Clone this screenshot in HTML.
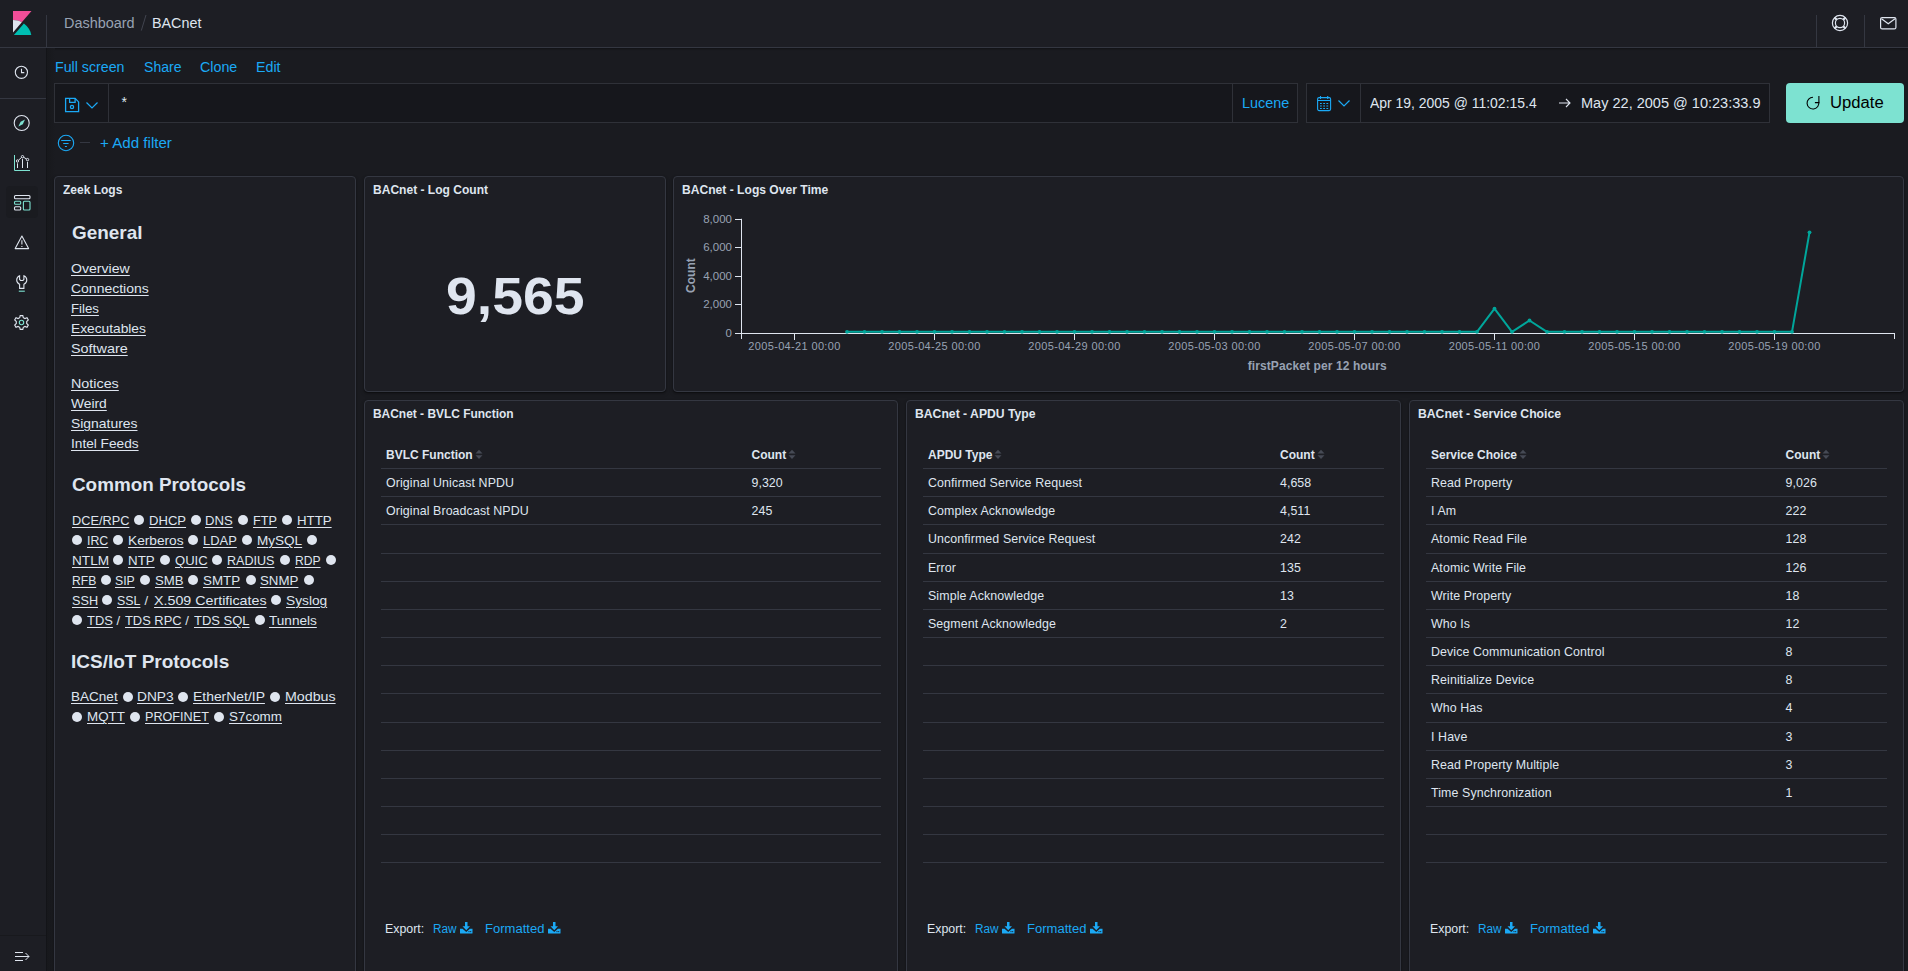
<!DOCTYPE html>
<html><head><meta charset="utf-8">
<style>
*{box-sizing:border-box;margin:0;padding:0}
html,body{width:1908px;height:971px;overflow:hidden;background:#1a1b20;font-family:"Liberation Sans",sans-serif;color:#dfe5ef}
div,span,svg{position:absolute}
.t{white-space:nowrap;line-height:1}
.link{color:#1ba9f5}
.panel{background:#1d1e24;border:1px solid #343741;border-radius:5px;overflow:hidden}
.ptitle{left:8px;top:7px;font-size:12px;font-weight:bold;color:#dfe5ef;line-height:14px;white-space:nowrap}
svg{overflow:visible}
</style><style>
.pl{white-space:nowrap;font-size:13px;line-height:1;color:#dfe5ef;letter-spacing:0.15px}
.pl u{text-decoration:underline;text-underline-offset:2px;text-decoration-thickness:1px;position:static}
.pl .bu{display:inline-block;position:relative;width:10px;height:10px;border-radius:50%;background:#dfe5ef;margin:0 5px;top:0px;vertical-align:-1px}
.pl .sl{font-weight:normal;margin:0 4px;position:static}
</style></head><body>
<!-- header -->
<div id="hdr" style="left:0;top:0;width:1908px;height:48px;background:#1d1e24;border-bottom:1px solid #343741;box-shadow:0 1px 2px rgba(0,0,0,.35)"></div>
<svg style="left:13px;top:11px" width="19" height="25" viewBox="0 0 19 25">
  <path d="M0 0 H18.5 L8.8 11.3 C6.5 9.6 3.5 8.9 0 8.9 Z" fill="#f04e98"/>
  <path d="M0 8.9 C3.5 8.9 6.5 9.6 8.8 11.3 L0 21.4 Z" fill="#dfe5ef"/>
  <path d="M0.9 24 L10.9 12.6 C15 15.6 17.6 19.5 18.3 24 Z" fill="#00bfb3"/>
</svg>
<div style="left:46px;top:15px;width:1px;height:33px;background:#343741"></div>
<div style="left:1816px;top:15px;width:1px;height:33px;background:#343741"></div>
<div style="left:1864px;top:15px;width:1px;height:33px;background:#343741"></div>
<svg style="left:1831px;top:14px" width="18" height="18" viewBox="0 0 18 18" fill="none" stroke="#dfe5ef" stroke-width="1.2">
  <circle cx="9" cy="9" r="7.6"/><circle cx="9" cy="9" r="4.6"/>
  <path d="M3.6 3.6 L5.8 5.8 M14.4 3.6 L12.2 5.8 M3.6 14.4 L5.8 12.2 M14.4 14.4 L12.2 12.2" stroke-width="2.2"/>
</svg>
<svg style="left:1880px;top:17px" width="17" height="13" viewBox="0 0 17 13" fill="none" stroke="#dfe5ef" stroke-width="1.2">
  <rect x="0.6" y="0.6" width="15.3" height="11.3" rx="1.5"/><path d="M1.5 1.8 L8.25 6.8 L15 1.8"/>
</svg>

<!-- sidebar -->
<div style="left:0;top:48px;width:46px;height:923px;background:#1d1e24"></div>
<div style="left:46px;top:48px;width:1px;height:923px;background:#131418"></div>
<div style="left:47px;top:48px;width:8px;height:923px;background:linear-gradient(90deg,#17181c,#1a1b20)"></div>
<div style="left:0;top:98px;width:46px;height:1px;background:#343741"></div>
<div style="left:0;top:935px;width:46px;height:1px;background:#18191d"></div>
<!-- clock -->
<svg style="left:14px;top:65px" width="15" height="15" viewBox="0 0 15 15" fill="none" stroke="#dfe5ef" stroke-width="1.1">
  <circle cx="7.4" cy="7.3" r="6.1"/><path d="M7.5 3.8 V7.6 H10.3"/>
</svg>
<!-- compass -->
<svg style="left:13px;top:115px" width="17" height="17" viewBox="0 0 17 17" fill="none" stroke="#dfe5ef" stroke-width="1.1">
  <circle cx="8.7" cy="8" r="7.5"/><path d="M12 4.6 L9.8 9.3 L5.4 11.4 L7.6 6.8 Z" fill="#7de2d1" stroke="none"/>
</svg>
<!-- visualize -->
<svg style="left:14px;top:154px" width="17" height="17" viewBox="0 0 17 17" fill="none" stroke="#dfe5ef" stroke-width="1">
  <path d="M0.5 1 V16.5 H16" stroke="#7de2d1"/>
  <circle cx="3.5" cy="7" r="1.2"/><circle cx="8.5" cy="2.7" r="1.2"/><circle cx="13.5" cy="5.6" r="1.2"/>
  <path d="M4.5 6.2 L7.6 3.4 M9.5 3.2 L12.5 5 M3.5 9.3 V14 M8.5 5 V14 M13.5 7.9 V14"/>
</svg>
<!-- dashboard (active) -->
<div style="left:6px;top:186px;width:32px;height:32px;border-radius:4px;background:#1a1b20"></div>
<svg style="left:14px;top:194px" width="17" height="17" viewBox="0 0 17 17" fill="none" stroke-width="1.1">
  <rect x="0.5" y="1.5" width="15.5" height="3.2" rx="1" stroke="#dfe5ef"/>
  <rect x="0.5" y="7.2" width="6.2" height="3.1" rx="1" stroke="#7de2d1"/>
  <rect x="0.5" y="12.7" width="6.2" height="3.3" rx="1" stroke="#dfe5ef"/>
  <rect x="9.4" y="7.2" width="6.6" height="8.8" rx="1" stroke="#7de2d1"/>
</svg>
<!-- warning -->
<svg style="left:14px;top:235px" width="16" height="15" viewBox="0 0 16 15" fill="none" stroke="#dfe5ef" stroke-width="1.1">
  <path d="M7.9 1 L14.6 13.6 H1.2 Z" stroke-linejoin="round"/><path d="M7.9 5.3 V9.6 M7.9 11 V12"/>
</svg>
<!-- wrench -->
<svg style="left:16px;top:275px" width="12" height="17" viewBox="0 0 12 17" fill="none" stroke="#dfe5ef" stroke-width="1.1">
  <path d="M3.6 0.8 C1.7 1.6 0.7 3.3 0.7 5.1 C0.7 7.1 1.9 8.6 3.6 9.3 V13.4 H7.9 V9.3 C9.6 8.6 10.8 7.1 10.8 5.1 C10.8 3.3 9.8 1.6 7.9 0.8 V4.5 L6.9 5.5 H4.6 L3.6 4.5 Z"/>
  <path d="M2.8 16.2 H8.8" stroke="#7de2d1"/>
</svg>
<!-- gear -->
<svg style="left:13px;top:314px" width="17" height="17" viewBox="0 0 17 17" fill="none" stroke="#dfe5ef" stroke-width="1.1">
  <path d="M7.2 0.6 H9.8 L10.3 2.7 L12 3.6 L14 2.8 L15.3 5 L13.7 6.5 V8.5 L15.3 10 L14 12.2 L12 11.4 L10.3 12.3 L9.8 14.4 H7.2 L6.7 12.3 L5 11.4 L3 12.2 L1.7 10 L3.3 8.5 V6.5 L1.7 5 L3 2.8 L5 3.6 L6.7 2.7 Z" transform="translate(0 1)"/>
  <circle cx="8.5" cy="8.5" r="2.2" stroke="#7de2d1"/>
</svg>
<!-- collapse -->
<svg style="left:15px;top:952px" width="15" height="10" viewBox="0 0 15 10" fill="none" stroke="#dfe5ef" stroke-width="1">
  <path d="M0 0.5 H8 M0 4.5 H14 M0 8.5 H8 M10.5 1 L14 4.5 L10.5 8"/>
</svg>

<!-- top links -->

<!-- query bar -->
<div style="left:54px;top:83px;width:1244px;height:40px;background:#16171c;border:1px solid #2f3138"></div>
<div style="left:108px;top:84px;width:1px;height:38px;background:#2f3138"></div>
<div style="left:1232px;top:84px;width:1px;height:38px;background:#2f3138"></div>
<svg style="left:64px;top:97px" width="16" height="16" viewBox="0 0 16 16" fill="none" stroke="#1ba9f5" stroke-width="1.3">
  <path d="M1.6 1.4 H11.1 L14.6 4.9 V14.6 H1.6 Z"/><path d="M5.6 1.4 V5.3 H11.1 V1.4"/><circle cx="8" cy="10" r="1.6"/>
</svg>
<svg style="left:86px;top:102px" width="12" height="7" viewBox="0 0 12 7" fill="none" stroke="#1ba9f5" stroke-width="1.2"><path d="M0.5 0.5 L6 6 L11.5 0.5"/></svg>

<div style="left:1306px;top:83px;width:464px;height:40px;background:#16171c;border:1px solid #2f3138"></div>
<div style="left:1360px;top:84px;width:1px;height:38px;background:#2f3138"></div>
<svg style="left:1317px;top:96px" width="15" height="16" viewBox="0 0 15 16" fill="none" stroke="#1ba9f5" stroke-width="1.1">
  <rect x="0.6" y="1.6" width="13" height="13" rx="1.5"/><path d="M0.6 4.5 H13.6 M3.5 0 V3 M10.7 0 V3"/>
  <path d="M3 7.5 H4.8 M6.2 7.5 H8 M9.4 7.5 H11.2 M3 10 H4.8 M6.2 10 H8 M9.4 10 H11.2 M3 12.5 H4.8 M6.2 12.5 H8 M9.4 12.5 H11.2" stroke-width="1.2"/>
</svg>
<svg style="left:1338px;top:100px" width="12" height="7" viewBox="0 0 12 7" fill="none" stroke="#1ba9f5" stroke-width="1.2"><path d="M0.5 0.5 L6 6 L11.5 0.5"/></svg>
<svg style="left:1559px;top:98px" width="12" height="10" viewBox="0 0 12 10" fill="none" stroke="#dfe5ef" stroke-width="1.1"><path d="M0 5 H11 M7 1 L11 5 L7 9"/></svg>

<div style="left:1786px;top:83px;width:118px;height:40px;background:#7de2d1;border-radius:4px"></div>
<svg style="left:1806px;top:95px" width="15" height="15" viewBox="0 0 15 15" fill="none" stroke="#000" stroke-width="1.1">
  <path d="M7 2.2 A5.9 5.9 0 1 0 12.75 6.9"/><path d="M12.9 0.9 V7.6 H8.9"/>
</svg>

<!-- filter row -->
<svg style="left:57px;top:134px" width="18" height="18" viewBox="0 0 18 18" fill="none" stroke="#1ba9f5" stroke-width="1.1">
  <circle cx="9" cy="9" r="7.7"/><path d="M4.2 6.5 H13.7 M6.2 9.5 H11.6 M7.9 12.5 H9.9"/>
</svg>
<div style="left:80px;top:142px;width:10px;height:1px;background:#343741"></div>

<div class="t" style="left:63.60px;top:16.25px;font-size:14px;color:#98a2b3;transform:scaleX(1.0314);transform-origin:0 0;">Dashboard</div>
<svg style="left:140px;top:14px" width="8" height="18" viewBox="0 0 8 18"><path d="M6 1 L1.3 16.6" stroke="#41444f" stroke-width="1"/></svg>
<div class="t" style="left:151.90px;top:16.25px;font-size:14px;color:#dfe5ef;transform:scaleX(1.0238);transform-origin:0 0;">BACnet</div>
<div class="t" style="left:55.30px;top:59.85px;font-size:14px;color:#1ba9f5;transform:scaleX(1.0155);transform-origin:0 0;">Full screen</div>
<div class="t" style="left:143.70px;top:59.85px;font-size:14px;color:#1ba9f5;transform:scaleX(1.0042);transform-origin:0 0;">Share</div>
<div class="t" style="left:199.70px;top:59.85px;font-size:14px;color:#1ba9f5;transform:scaleX(1.0202);transform-origin:0 0;">Clone</div>
<div class="t" style="left:255.70px;top:59.85px;font-size:14px;color:#1ba9f5;transform:scaleX(1.0155);transform-origin:0 0;">Edit</div>
<div class="t" style="left:121.4px;top:94.55px;font-size:14px;color:#dfe5ef;">*</div>
<div class="t" style="left:1241.50px;top:96.25px;font-size:14px;color:#1ba9f5;transform:scaleX(1.0282);transform-origin:0 0;">Lucene</div>
<div class="t" style="left:1370.40px;top:96.25px;font-size:14px;color:#dfe5ef;transform:scaleX(0.9961);transform-origin:0 0;">Apr 19, 2005 @ 11:02:15.4</div>
<div class="t" style="left:1580.50px;top:96.25px;font-size:14px;color:#dfe5ef;transform:scaleX(1.0374);transform-origin:0 0;">May 22, 2005 @ 10:23:33.9</div>
<div class="t" style="left:1830.40px;top:95.35px;font-size:16px;color:#000;transform:scaleX(1.0399);transform-origin:0 0;">Update</div>
<div class="t" style="left:100.00px;top:136.05px;font-size:14px;color:#1ba9f5;transform:scaleX(1.0807);transform-origin:0 0;">+ Add filter</div>
<div style="left:54px;top:176px;width:302px;height:925px;background:#1d1e24;border:1px solid #343741;border-radius:4px;box-shadow:0 1px 1.5px rgba(0,0,0,.45),0 2px 4px rgba(0,0,0,.15)"></div>
<div class="t" style="left:63.40px;top:183.64px;font-size:12px;color:#dfe5ef;transform:scaleX(0.9995);transform-origin:0 0;font-weight:bold;">Zeek Logs</div>
<div class="t" style="left:71.70px;top:222.61px;font-size:19px;color:#dfe5ef;transform:scaleX(0.9951);transform-origin:0 0;font-weight:bold;">General</div>
<div class="t" style="left:71.20px;top:261.99px;font-size:13px;color:#dfe5ef;transform:scaleX(1.0851);transform-origin:0 0;text-decoration:underline;text-underline-offset:2px;text-decoration-thickness:1px;">Overview</div>
<div class="t" style="left:71.20px;top:281.99px;font-size:13px;color:#dfe5ef;transform:scaleX(1.0747);transform-origin:0 0;text-decoration:underline;text-underline-offset:2px;text-decoration-thickness:1px;">Connections</div>
<div class="t" style="left:71.20px;top:301.99px;font-size:13px;color:#dfe5ef;transform:scaleX(1.0163);transform-origin:0 0;text-decoration:underline;text-underline-offset:2px;text-decoration-thickness:1px;">Files</div>
<div class="t" style="left:71.20px;top:321.99px;font-size:13px;color:#dfe5ef;transform:scaleX(1.0573);transform-origin:0 0;text-decoration:underline;text-underline-offset:2px;text-decoration-thickness:1px;">Executables</div>
<div class="t" style="left:71.20px;top:341.99px;font-size:13px;color:#dfe5ef;transform:scaleX(1.1050);transform-origin:0 0;text-decoration:underline;text-underline-offset:2px;text-decoration-thickness:1px;">Software</div>
<div class="t" style="left:71.20px;top:376.79px;font-size:13px;color:#dfe5ef;transform:scaleX(1.1024);transform-origin:0 0;text-decoration:underline;text-underline-offset:2px;text-decoration-thickness:1px;">Notices</div>
<div class="t" style="left:71.20px;top:396.79px;font-size:13px;color:#dfe5ef;transform:scaleX(1.0617);transform-origin:0 0;text-decoration:underline;text-underline-offset:2px;text-decoration-thickness:1px;">Weird</div>
<div class="t" style="left:71.20px;top:416.79px;font-size:13px;color:#dfe5ef;transform:scaleX(1.0696);transform-origin:0 0;text-decoration:underline;text-underline-offset:2px;text-decoration-thickness:1px;">Signatures</div>
<div class="t" style="left:71.20px;top:436.79px;font-size:13px;color:#dfe5ef;transform:scaleX(1.0509);transform-origin:0 0;text-decoration:underline;text-underline-offset:2px;text-decoration-thickness:1px;">Intel Feeds</div>
<div class="t" style="left:71.60px;top:475.01px;font-size:19px;color:#dfe5ef;transform:scaleX(0.9924);transform-origin:0 0;font-weight:bold;">Common Protocols</div>
<div class="t" style="left:71.20px;top:651.81px;font-size:19px;color:#dfe5ef;transform:scaleX(0.9990);transform-origin:0 0;font-weight:bold;">ICS/IoT Protocols</div>
<div class="t" style="left:71.59px;top:513.59px;font-size:13px;color:#dfe5ef;transform:scaleX(0.9801);transform-origin:0 0;text-decoration:underline;text-underline-offset:2px;text-decoration-thickness:1px;">DCE/RPC</div>
<div style="left:133.83px;top:515.40px;width:10px;height:10px;border-radius:50%;background:#dfe5ef"></div>
<div class="t" style="left:148.72px;top:513.59px;font-size:13px;color:#dfe5ef;transform:scaleX(1.0064);transform-origin:0 0;text-decoration:underline;text-underline-offset:2px;text-decoration-thickness:1px;">DHCP</div>
<div style="left:190.60px;top:515.40px;width:10px;height:10px;border-radius:50%;background:#dfe5ef"></div>
<div class="t" style="left:205.08px;top:513.59px;font-size:13px;color:#dfe5ef;transform:scaleX(1.0085);transform-origin:0 0;text-decoration:underline;text-underline-offset:2px;text-decoration-thickness:1px;">DNS</div>
<div style="left:237.82px;top:515.40px;width:10px;height:10px;border-radius:50%;background:#dfe5ef"></div>
<div class="t" style="left:252.87px;top:513.59px;font-size:13px;color:#dfe5ef;transform:scaleX(0.9735);transform-origin:0 0;text-decoration:underline;text-underline-offset:2px;text-decoration-thickness:1px;">FTP</div>
<div style="left:281.90px;top:515.40px;width:10px;height:10px;border-radius:50%;background:#dfe5ef"></div>
<div class="t" style="left:297.04px;top:513.59px;font-size:13px;color:#dfe5ef;transform:scaleX(1.0198);transform-origin:0 0;text-decoration:underline;text-underline-offset:2px;text-decoration-thickness:1px;">HTTP</div>
<div style="left:72.03px;top:535.40px;width:10px;height:10px;border-radius:50%;background:#dfe5ef"></div>
<div class="t" style="left:86.92px;top:533.59px;font-size:13px;color:#dfe5ef;transform:scaleX(0.9495);transform-origin:0 0;text-decoration:underline;text-underline-offset:2px;text-decoration-thickness:1px;">IRC</div>
<div style="left:112.90px;top:535.40px;width:10px;height:10px;border-radius:50%;background:#dfe5ef"></div>
<div class="t" style="left:128.12px;top:533.59px;font-size:13px;color:#dfe5ef;transform:scaleX(1.0525);transform-origin:0 0;text-decoration:underline;text-underline-offset:2px;text-decoration-thickness:1px;">Kerberos</div>
<div style="left:188.38px;top:535.40px;width:10px;height:10px;border-radius:50%;background:#dfe5ef"></div>
<div class="t" style="left:203.10px;top:533.59px;font-size:13px;color:#dfe5ef;transform:scaleX(0.9946);transform-origin:0 0;text-decoration:underline;text-underline-offset:2px;text-decoration-thickness:1px;">LDAP</div>
<div style="left:241.69px;top:535.40px;width:10px;height:10px;border-radius:50%;background:#dfe5ef"></div>
<div class="t" style="left:256.66px;top:533.59px;font-size:13px;color:#dfe5ef;transform:scaleX(1.0418);transform-origin:0 0;text-decoration:underline;text-underline-offset:2px;text-decoration-thickness:1px;">MySQL</div>
<div style="left:306.70px;top:535.40px;width:10px;height:10px;border-radius:50%;background:#dfe5ef"></div>
<div class="t" style="left:71.59px;top:553.59px;font-size:13px;color:#dfe5ef;transform:scaleX(1.0477);transform-origin:0 0;text-decoration:underline;text-underline-offset:2px;text-decoration-thickness:1px;">NTLM</div>
<div style="left:113.39px;top:555.40px;width:10px;height:10px;border-radius:50%;background:#dfe5ef"></div>
<div class="t" style="left:128.12px;top:553.59px;font-size:13px;color:#dfe5ef;transform:scaleX(1.0268);transform-origin:0 0;text-decoration:underline;text-underline-offset:2px;text-decoration-thickness:1px;">NTP</div>
<div style="left:159.87px;top:555.40px;width:10px;height:10px;border-radius:50%;background:#dfe5ef"></div>
<div class="t" style="left:174.92px;top:553.59px;font-size:13px;color:#dfe5ef;transform:scaleX(1.0040);transform-origin:0 0;text-decoration:underline;text-underline-offset:2px;text-decoration-thickness:1px;">QUIC</div>
<div style="left:212.27px;top:555.40px;width:10px;height:10px;border-radius:50%;background:#dfe5ef"></div>
<div class="t" style="left:227.33px;top:553.59px;font-size:13px;color:#dfe5ef;transform:scaleX(0.9661);transform-origin:0 0;text-decoration:underline;text-underline-offset:2px;text-decoration-thickness:1px;">RADIUS</div>
<div style="left:280.17px;top:555.40px;width:10px;height:10px;border-radius:50%;background:#dfe5ef"></div>
<div class="t" style="left:295.22px;top:553.59px;font-size:13px;color:#dfe5ef;transform:scaleX(0.9305);transform-origin:0 0;text-decoration:underline;text-underline-offset:2px;text-decoration-thickness:1px;">RDP</div>
<div style="left:325.99px;top:555.40px;width:10px;height:10px;border-radius:50%;background:#dfe5ef"></div>
<div class="t" style="left:71.59px;top:573.59px;font-size:13px;color:#dfe5ef;transform:scaleX(0.9317);transform-origin:0 0;text-decoration:underline;text-underline-offset:2px;text-decoration-thickness:1px;">RFB</div>
<div style="left:100.54px;top:575.40px;width:10px;height:10px;border-radius:50%;background:#dfe5ef"></div>
<div class="t" style="left:115.26px;top:573.59px;font-size:13px;color:#dfe5ef;transform:scaleX(0.9438);transform-origin:0 0;text-decoration:underline;text-underline-offset:2px;text-decoration-thickness:1px;">SIP</div>
<div style="left:140.09px;top:575.40px;width:10px;height:10px;border-radius:50%;background:#dfe5ef"></div>
<div class="t" style="left:155.15px;top:573.59px;font-size:13px;color:#dfe5ef;transform:scaleX(1.0120);transform-origin:0 0;text-decoration:underline;text-underline-offset:2px;text-decoration-thickness:1px;">SMB</div>
<div style="left:188.38px;top:575.40px;width:10px;height:10px;border-radius:50%;background:#dfe5ef"></div>
<div class="t" style="left:203.43px;top:573.59px;font-size:13px;color:#dfe5ef;transform:scaleX(1.0269);transform-origin:0 0;text-decoration:underline;text-underline-offset:2px;text-decoration-thickness:1px;">SMTP</div>
<div style="left:245.56px;top:575.40px;width:10px;height:10px;border-radius:50%;background:#dfe5ef"></div>
<div class="t" style="left:260.29px;top:573.59px;font-size:13px;color:#dfe5ef;transform:scaleX(1.0222);transform-origin:0 0;text-decoration:underline;text-underline-offset:2px;text-decoration-thickness:1px;">SNMP</div>
<div style="left:303.74px;top:575.40px;width:10px;height:10px;border-radius:50%;background:#dfe5ef"></div>
<div class="t" style="left:71.59px;top:593.59px;font-size:13px;color:#dfe5ef;transform:scaleX(0.9740);transform-origin:0 0;text-decoration:underline;text-underline-offset:2px;text-decoration-thickness:1px;">SSH</div>
<div style="left:102.44px;top:595.40px;width:10px;height:10px;border-radius:50%;background:#dfe5ef"></div>
<div class="t" style="left:117.41px;top:593.59px;font-size:13px;color:#dfe5ef;transform:scaleX(0.9521);transform-origin:0 0;text-decoration:underline;text-underline-offset:2px;text-decoration-thickness:1px;">SSL</div>
<div class="t" style="left:144.42748846407383px;top:593.59px;font-size:13px;color:#dfe5ef;">/</div>
<div class="t" style="left:153.50px;top:593.59px;font-size:13px;color:#dfe5ef;transform:scaleX(1.0968);transform-origin:0 0;text-decoration:underline;text-underline-offset:2px;text-decoration-thickness:1px;">X.509 Certificates</div>
<div style="left:270.78px;top:595.40px;width:10px;height:10px;border-radius:50%;background:#dfe5ef"></div>
<div class="t" style="left:285.83px;top:593.59px;font-size:13px;color:#dfe5ef;transform:scaleX(1.0556);transform-origin:0 0;text-decoration:underline;text-underline-offset:2px;text-decoration-thickness:1px;">Syslog</div>
<div style="left:72.03px;top:615.40px;width:10px;height:10px;border-radius:50%;background:#dfe5ef"></div>
<div class="t" style="left:86.92px;top:613.59px;font-size:13px;color:#dfe5ef;transform:scaleX(0.9951);transform-origin:0 0;text-decoration:underline;text-underline-offset:2px;text-decoration-thickness:1px;">TDS</div>
<div class="t" style="left:116.41166776532631px;top:613.59px;font-size:13px;color:#dfe5ef;">/</div>
<div class="t" style="left:125.15px;top:613.59px;font-size:13px;color:#dfe5ef;transform:scaleX(0.9906);transform-origin:0 0;text-decoration:underline;text-underline-offset:2px;text-decoration-thickness:1px;">TDS RPC</div>
<div class="t" style="left:185.29762689518788px;top:613.59px;font-size:13px;color:#dfe5ef;">/</div>
<div class="t" style="left:194.04px;top:613.59px;font-size:13px;color:#dfe5ef;transform:scaleX(0.9984);transform-origin:0 0;text-decoration:underline;text-underline-offset:2px;text-decoration-thickness:1px;">TDS SQL</div>
<div style="left:254.63px;top:615.40px;width:10px;height:10px;border-radius:50%;background:#dfe5ef"></div>
<div class="t" style="left:269.35px;top:613.59px;font-size:13px;color:#dfe5ef;transform:scaleX(1.0439);transform-origin:0 0;text-decoration:underline;text-underline-offset:2px;text-decoration-thickness:1px;">Tunnels</div>
<div class="t" style="left:71.16px;top:689.79px;font-size:13px;color:#dfe5ef;transform:scaleX(1.0414);transform-origin:0 0;text-decoration:underline;text-underline-offset:2px;text-decoration-thickness:1px;">BACnet</div>
<div style="left:122.67px;top:691.60px;width:10px;height:10px;border-radius:50%;background:#dfe5ef"></div>
<div class="t" style="left:137.20px;top:689.79px;font-size:13px;color:#dfe5ef;transform:scaleX(1.0577);transform-origin:0 0;text-decoration:underline;text-underline-offset:2px;text-decoration-thickness:1px;">DNP3</div>
<div style="left:178.43px;top:691.60px;width:10px;height:10px;border-radius:50%;background:#dfe5ef"></div>
<div class="t" style="left:192.97px;top:689.79px;font-size:13px;color:#dfe5ef;transform:scaleX(1.0701);transform-origin:0 0;text-decoration:underline;text-underline-offset:2px;text-decoration-thickness:1px;">EtherNet/IP</div>
<div style="left:269.86px;top:691.60px;width:10px;height:10px;border-radius:50%;background:#dfe5ef"></div>
<div class="t" style="left:285.14px;top:689.79px;font-size:13px;color:#dfe5ef;transform:scaleX(1.0944);transform-origin:0 0;text-decoration:underline;text-underline-offset:2px;text-decoration-thickness:1px;">Modbus</div>
<div style="left:72.03px;top:711.60px;width:10px;height:10px;border-radius:50%;background:#dfe5ef"></div>
<div class="t" style="left:87.01px;top:709.79px;font-size:13px;color:#dfe5ef;transform:scaleX(1.0285);transform-origin:0 0;text-decoration:underline;text-underline-offset:2px;text-decoration-thickness:1px;">MQTT</div>
<div style="left:130.00px;top:711.60px;width:10px;height:10px;border-radius:50%;background:#dfe5ef"></div>
<div class="t" style="left:144.98px;top:709.79px;font-size:13px;color:#dfe5ef;transform:scaleX(0.9714);transform-origin:0 0;text-decoration:underline;text-underline-offset:2px;text-decoration-thickness:1px;">PROFINET</div>
<div style="left:214.09px;top:711.60px;width:10px;height:10px;border-radius:50%;background:#dfe5ef"></div>
<div class="t" style="left:228.93px;top:709.79px;font-size:13px;color:#dfe5ef;transform:scaleX(1.0328);transform-origin:0 0;text-decoration:underline;text-underline-offset:2px;text-decoration-thickness:1px;">S7comm</div>
<div style="left:364px;top:176px;width:302px;height:216px;background:#1d1e24;border:1px solid #343741;border-radius:4px;box-shadow:0 1px 1.5px rgba(0,0,0,.45),0 2px 4px rgba(0,0,0,.15)"></div>
<div class="t" style="left:373.00px;top:183.64px;font-size:12px;color:#dfe5ef;transform:scaleX(1.0031);transform-origin:0 0;font-weight:bold;">BACnet - Log Count</div>
<div class="t" style="left:445.80px;top:271.12px;font-size:51px;color:#dfe5ef;transform:scaleX(1.0846);transform-origin:0 0;font-weight:bold;">9,565</div>
<div style="left:673px;top:176px;width:1231px;height:216px;background:#1d1e24;border:1px solid #343741;border-radius:4px;box-shadow:0 1px 1.5px rgba(0,0,0,.45),0 2px 4px rgba(0,0,0,.15)"></div>
<div class="t" style="left:682.00px;top:183.64px;font-size:12px;color:#dfe5ef;transform:scaleX(1.0082);transform-origin:0 0;font-weight:bold;">BACnet - Logs Over Time</div>
<svg style="left:0;top:0" width="1908" height="971" viewBox="0 0 1908 971" font-family="Liberation Sans, sans-serif"><path d="M741.5 218.8 V339 M741 333.5 H1894.5 M1894.5 333 V339" stroke="#dfe5ef" stroke-width="1" fill="none"/><path d="M735 333.5 H741" stroke="#dfe5ef" stroke-width="1"/><text x="732" y="337.3" text-anchor="end" font-size="11.5" fill="#98a2b3">0</text><path d="M735 304.5 H741" stroke="#dfe5ef" stroke-width="1"/><text x="732" y="308.3" text-anchor="end" font-size="11.5" fill="#98a2b3">2,000</text><path d="M735 276.5 H741" stroke="#dfe5ef" stroke-width="1"/><text x="732" y="280.3" text-anchor="end" font-size="11.5" fill="#98a2b3">4,000</text><path d="M735 247.5 H741" stroke="#dfe5ef" stroke-width="1"/><text x="732" y="251.3" text-anchor="end" font-size="11.5" fill="#98a2b3">6,000</text><path d="M735 219.5 H741" stroke="#dfe5ef" stroke-width="1"/><text x="732" y="223.3" text-anchor="end" font-size="11.5" fill="#98a2b3">8,000</text><path d="M794.5 333 V340" stroke="#dfe5ef" stroke-width="1"/><text x="794.5" y="349.8" text-anchor="middle" font-size="11" fill="#98a2b3" letter-spacing="0.35">2005-04-21 00:00</text><path d="M934.5 333 V340" stroke="#dfe5ef" stroke-width="1"/><text x="934.5" y="349.8" text-anchor="middle" font-size="11" fill="#98a2b3" letter-spacing="0.35">2005-04-25 00:00</text><path d="M1074.5 333 V340" stroke="#dfe5ef" stroke-width="1"/><text x="1074.5" y="349.8" text-anchor="middle" font-size="11" fill="#98a2b3" letter-spacing="0.35">2005-04-29 00:00</text><path d="M1214.5 333 V340" stroke="#dfe5ef" stroke-width="1"/><text x="1214.5" y="349.8" text-anchor="middle" font-size="11" fill="#98a2b3" letter-spacing="0.35">2005-05-03 00:00</text><path d="M1354.5 333 V340" stroke="#dfe5ef" stroke-width="1"/><text x="1354.5" y="349.8" text-anchor="middle" font-size="11" fill="#98a2b3" letter-spacing="0.35">2005-05-07 00:00</text><path d="M1494.5 333 V340" stroke="#dfe5ef" stroke-width="1"/><text x="1494.5" y="349.8" text-anchor="middle" font-size="11" fill="#98a2b3" letter-spacing="0.35">2005-05-11 00:00</text><path d="M1634.5 333 V340" stroke="#dfe5ef" stroke-width="1"/><text x="1634.5" y="349.8" text-anchor="middle" font-size="11" fill="#98a2b3" letter-spacing="0.35">2005-05-15 00:00</text><path d="M1774.5 333 V340" stroke="#dfe5ef" stroke-width="1"/><text x="1774.5" y="349.8" text-anchor="middle" font-size="11" fill="#98a2b3" letter-spacing="0.35">2005-05-19 00:00</text><text x="1317.2" y="370.2" text-anchor="middle" font-size="12" font-weight="bold" fill="#98a2b3" letter-spacing="0.1">firstPacket per 12 hours</text><text transform="translate(694.5 275.6) rotate(-90)" text-anchor="middle" font-size="12" font-weight="bold" fill="#98a2b3">Count</text><path d="M847.0 331.8 L864.5 331.8 L882.0 331.8 L899.5 331.8 L917.0 331.8 L934.5 331.8 L952.0 331.8 L969.5 331.8 L987.0 331.8 L1004.5 331.8 L1022.0 331.8 L1039.5 331.8 L1057.0 331.8 L1074.5 331.8 L1092.0 331.8 L1109.5 331.8 L1127.0 331.8 L1144.5 331.8 L1162.0 331.8 L1179.5 331.8 L1197.0 331.8 L1214.5 331.8 L1232.0 331.8 L1249.5 331.8 L1267.0 331.8 L1284.5 331.8 L1302.0 331.8 L1319.5 331.8 L1337.0 331.8 L1354.5 331.8 L1372.0 331.8 L1389.5 331.8 L1407.0 331.8 L1424.5 331.8 L1442.0 331.8 L1459.5 331.8 L1477.0 331.8 L1494.5 308.6 L1512.0 331.8 L1529.5 320.5 L1547.0 331.8 L1564.5 331.8 L1582.0 331.8 L1599.5 331.8 L1617.0 331.8 L1634.5 331.8 L1652.0 331.8 L1669.5 331.8 L1687.0 331.8 L1704.5 331.8 L1722.0 331.8 L1739.5 331.8 L1757.0 331.8 L1774.5 331.8 L1792.0 331.8 L1809.5 232.3" stroke="#00a69b" stroke-width="2" fill="none" stroke-linejoin="round"/><circle cx="847.0" cy="331.8" r="1.9" fill="#00a69b"/><circle cx="864.5" cy="331.8" r="1.9" fill="#00a69b"/><circle cx="882.0" cy="331.8" r="1.9" fill="#00a69b"/><circle cx="899.5" cy="331.8" r="1.9" fill="#00a69b"/><circle cx="917.0" cy="331.8" r="1.9" fill="#00a69b"/><circle cx="934.5" cy="331.8" r="1.9" fill="#00a69b"/><circle cx="952.0" cy="331.8" r="1.9" fill="#00a69b"/><circle cx="969.5" cy="331.8" r="1.9" fill="#00a69b"/><circle cx="987.0" cy="331.8" r="1.9" fill="#00a69b"/><circle cx="1004.5" cy="331.8" r="1.9" fill="#00a69b"/><circle cx="1022.0" cy="331.8" r="1.9" fill="#00a69b"/><circle cx="1039.5" cy="331.8" r="1.9" fill="#00a69b"/><circle cx="1057.0" cy="331.8" r="1.9" fill="#00a69b"/><circle cx="1074.5" cy="331.8" r="1.9" fill="#00a69b"/><circle cx="1092.0" cy="331.8" r="1.9" fill="#00a69b"/><circle cx="1109.5" cy="331.8" r="1.9" fill="#00a69b"/><circle cx="1127.0" cy="331.8" r="1.9" fill="#00a69b"/><circle cx="1144.5" cy="331.8" r="1.9" fill="#00a69b"/><circle cx="1162.0" cy="331.8" r="1.9" fill="#00a69b"/><circle cx="1179.5" cy="331.8" r="1.9" fill="#00a69b"/><circle cx="1197.0" cy="331.8" r="1.9" fill="#00a69b"/><circle cx="1214.5" cy="331.8" r="1.9" fill="#00a69b"/><circle cx="1232.0" cy="331.8" r="1.9" fill="#00a69b"/><circle cx="1249.5" cy="331.8" r="1.9" fill="#00a69b"/><circle cx="1267.0" cy="331.8" r="1.9" fill="#00a69b"/><circle cx="1284.5" cy="331.8" r="1.9" fill="#00a69b"/><circle cx="1302.0" cy="331.8" r="1.9" fill="#00a69b"/><circle cx="1319.5" cy="331.8" r="1.9" fill="#00a69b"/><circle cx="1337.0" cy="331.8" r="1.9" fill="#00a69b"/><circle cx="1354.5" cy="331.8" r="1.9" fill="#00a69b"/><circle cx="1372.0" cy="331.8" r="1.9" fill="#00a69b"/><circle cx="1389.5" cy="331.8" r="1.9" fill="#00a69b"/><circle cx="1407.0" cy="331.8" r="1.9" fill="#00a69b"/><circle cx="1424.5" cy="331.8" r="1.9" fill="#00a69b"/><circle cx="1442.0" cy="331.8" r="1.9" fill="#00a69b"/><circle cx="1459.5" cy="331.8" r="1.9" fill="#00a69b"/><circle cx="1477.0" cy="331.8" r="1.9" fill="#00a69b"/><circle cx="1494.5" cy="308.6" r="1.9" fill="#00a69b"/><circle cx="1512.0" cy="331.8" r="1.9" fill="#00a69b"/><circle cx="1529.5" cy="320.5" r="1.9" fill="#00a69b"/><circle cx="1547.0" cy="331.8" r="1.9" fill="#00a69b"/><circle cx="1564.5" cy="331.8" r="1.9" fill="#00a69b"/><circle cx="1582.0" cy="331.8" r="1.9" fill="#00a69b"/><circle cx="1599.5" cy="331.8" r="1.9" fill="#00a69b"/><circle cx="1617.0" cy="331.8" r="1.9" fill="#00a69b"/><circle cx="1634.5" cy="331.8" r="1.9" fill="#00a69b"/><circle cx="1652.0" cy="331.8" r="1.9" fill="#00a69b"/><circle cx="1669.5" cy="331.8" r="1.9" fill="#00a69b"/><circle cx="1687.0" cy="331.8" r="1.9" fill="#00a69b"/><circle cx="1704.5" cy="331.8" r="1.9" fill="#00a69b"/><circle cx="1722.0" cy="331.8" r="1.9" fill="#00a69b"/><circle cx="1739.5" cy="331.8" r="1.9" fill="#00a69b"/><circle cx="1757.0" cy="331.8" r="1.9" fill="#00a69b"/><circle cx="1774.5" cy="331.8" r="1.9" fill="#00a69b"/><circle cx="1792.0" cy="331.8" r="1.9" fill="#00a69b"/><circle cx="1809.5" cy="232.3" r="1.9" fill="#00a69b"/></svg>
<div style="left:364px;top:400px;width:534px;height:701px;background:#1d1e24;border:1px solid #343741;border-radius:4px;box-shadow:0 1px 1.5px rgba(0,0,0,.45),0 2px 4px rgba(0,0,0,.15)"></div>
<div class="t" style="left:373.00px;top:407.84px;font-size:12px;color:#dfe5ef;transform:scaleX(0.9950);transform-origin:0 0;font-weight:bold;">BACnet - BVLC Function</div>
<div class="t" style="left:386px;top:448.84px;font-size:12px;color:#dfe5ef;font-weight:bold;">BVLC Function</div>
<svg style="left:474.640625px;top:449px" width="8" height="11" viewBox="0 0 8 11"><path d="M0.5 4.5 L4 0.8 L7.5 4.5 Z M0.5 6.3 L4 10 L7.5 6.3 Z" fill="#464a55"/></svg>
<div class="t" style="left:751.5px;top:448.84px;font-size:12px;color:#dfe5ef;font-weight:bold;">Count</div>
<svg style="left:788.15625px;top:449px" width="8" height="11" viewBox="0 0 8 11"><path d="M0.5 4.5 L4 0.8 L7.5 4.5 Z M0.5 6.3 L4 10 L7.5 6.3 Z" fill="#464a55"/></svg>
<div style="left:381px;top:468px;width:500px;height:1px;background:#343741"></div>
<div style="left:381px;top:496px;width:500px;height:1px;background:#343741"></div>
<div style="left:381px;top:524px;width:500px;height:1px;background:#343741"></div>
<div style="left:381px;top:553px;width:500px;height:1px;background:#343741"></div>
<div style="left:381px;top:581px;width:500px;height:1px;background:#343741"></div>
<div style="left:381px;top:609px;width:500px;height:1px;background:#343741"></div>
<div style="left:381px;top:637px;width:500px;height:1px;background:#343741"></div>
<div style="left:381px;top:665px;width:500px;height:1px;background:#343741"></div>
<div style="left:381px;top:693px;width:500px;height:1px;background:#343741"></div>
<div style="left:381px;top:722px;width:500px;height:1px;background:#343741"></div>
<div style="left:381px;top:750px;width:500px;height:1px;background:#343741"></div>
<div style="left:381px;top:778px;width:500px;height:1px;background:#343741"></div>
<div style="left:381px;top:806px;width:500px;height:1px;background:#343741"></div>
<div style="left:381px;top:834px;width:500px;height:1px;background:#343741"></div>
<div style="left:381px;top:862px;width:500px;height:1px;background:#343741"></div>
<div class="t" style="left:386px;top:476.80px;font-size:12.4px;color:#dfe5ef;letter-spacing:0.1px;">Original Unicast NPDU</div>
<div class="t" style="left:751.5px;top:476.80px;font-size:12.4px;color:#dfe5ef;letter-spacing:0.05px;">9,320</div>
<div class="t" style="left:386px;top:504.80px;font-size:12.4px;color:#dfe5ef;letter-spacing:0.1px;">Original Broadcast NPDU</div>
<div class="t" style="left:751.5px;top:504.80px;font-size:12.4px;color:#dfe5ef;letter-spacing:0.05px;">245</div>
<div class="t" style="left:385.40px;top:922.64px;font-size:12px;color:#dfe5ef;transform:scaleX(1.0289);transform-origin:0 0;">Export:</div>
<div class="t" style="left:432.60px;top:922.64px;font-size:12px;color:#1ba9f5;transform:scaleX(0.9827);transform-origin:0 0;">Raw</div>
<svg style="left:460px;top:922px" width="13" height="12" viewBox="0 0 13 12"><path d="M5 0 H7.5 V4.3 H10 L6.25 8.2 L2.5 4.3 H5 Z M0 6.8 H2.6 L6.25 10 L9.9 6.8 H12.5 V11 Q12.5 11.5 12 11.5 H0.5 Q0 11.5 0 11 Z" fill="#1ba9f5"/><circle cx="9" cy="9.6" r="0.6" fill="#1d1e24"/><circle cx="10.7" cy="9.6" r="0.6" fill="#1d1e24"/></svg>
<div class="t" style="left:484.50px;top:922.64px;font-size:12px;color:#1ba9f5;transform:scaleX(1.0865);transform-origin:0 0;">Formatted</div>
<svg style="left:547.7px;top:922px" width="13" height="12" viewBox="0 0 13 12"><path d="M5 0 H7.5 V4.3 H10 L6.25 8.2 L2.5 4.3 H5 Z M0 6.8 H2.6 L6.25 10 L9.9 6.8 H12.5 V11 Q12.5 11.5 12 11.5 H0.5 Q0 11.5 0 11 Z" fill="#1ba9f5"/><circle cx="9" cy="9.6" r="0.6" fill="#1d1e24"/><circle cx="10.7" cy="9.6" r="0.6" fill="#1d1e24"/></svg>
<div style="left:906px;top:400px;width:495px;height:701px;background:#1d1e24;border:1px solid #343741;border-radius:4px;box-shadow:0 1px 1.5px rgba(0,0,0,.45),0 2px 4px rgba(0,0,0,.15)"></div>
<div class="t" style="left:915.00px;top:407.84px;font-size:12px;color:#dfe5ef;transform:scaleX(1.0161);transform-origin:0 0;font-weight:bold;">BACnet - APDU Type</div>
<div class="t" style="left:928px;top:448.84px;font-size:12px;color:#dfe5ef;font-weight:bold;">APDU Type</div>
<svg style="left:994.453125px;top:449px" width="8" height="11" viewBox="0 0 8 11"><path d="M0.5 4.5 L4 0.8 L7.5 4.5 Z M0.5 6.3 L4 10 L7.5 6.3 Z" fill="#464a55"/></svg>
<div class="t" style="left:1280px;top:448.84px;font-size:12px;color:#dfe5ef;font-weight:bold;">Count</div>
<svg style="left:1316.65625px;top:449px" width="8" height="11" viewBox="0 0 8 11"><path d="M0.5 4.5 L4 0.8 L7.5 4.5 Z M0.5 6.3 L4 10 L7.5 6.3 Z" fill="#464a55"/></svg>
<div style="left:923px;top:468px;width:461px;height:1px;background:#343741"></div>
<div style="left:923px;top:496px;width:461px;height:1px;background:#343741"></div>
<div style="left:923px;top:524px;width:461px;height:1px;background:#343741"></div>
<div style="left:923px;top:553px;width:461px;height:1px;background:#343741"></div>
<div style="left:923px;top:581px;width:461px;height:1px;background:#343741"></div>
<div style="left:923px;top:609px;width:461px;height:1px;background:#343741"></div>
<div style="left:923px;top:637px;width:461px;height:1px;background:#343741"></div>
<div style="left:923px;top:665px;width:461px;height:1px;background:#343741"></div>
<div style="left:923px;top:693px;width:461px;height:1px;background:#343741"></div>
<div style="left:923px;top:722px;width:461px;height:1px;background:#343741"></div>
<div style="left:923px;top:750px;width:461px;height:1px;background:#343741"></div>
<div style="left:923px;top:778px;width:461px;height:1px;background:#343741"></div>
<div style="left:923px;top:806px;width:461px;height:1px;background:#343741"></div>
<div style="left:923px;top:834px;width:461px;height:1px;background:#343741"></div>
<div style="left:923px;top:862px;width:461px;height:1px;background:#343741"></div>
<div class="t" style="left:928px;top:476.80px;font-size:12.4px;color:#dfe5ef;letter-spacing:0.1px;">Confirmed Service Request</div>
<div class="t" style="left:1280px;top:476.80px;font-size:12.4px;color:#dfe5ef;letter-spacing:0.05px;">4,658</div>
<div class="t" style="left:928px;top:504.80px;font-size:12.4px;color:#dfe5ef;letter-spacing:0.1px;">Complex Acknowledge</div>
<div class="t" style="left:1280px;top:504.80px;font-size:12.4px;color:#dfe5ef;letter-spacing:0.05px;">4,511</div>
<div class="t" style="left:928px;top:532.80px;font-size:12.4px;color:#dfe5ef;letter-spacing:0.1px;">Unconfirmed Service Request</div>
<div class="t" style="left:1280px;top:532.80px;font-size:12.4px;color:#dfe5ef;letter-spacing:0.05px;">242</div>
<div class="t" style="left:928px;top:561.80px;font-size:12.4px;color:#dfe5ef;letter-spacing:0.1px;">Error</div>
<div class="t" style="left:1280px;top:561.80px;font-size:12.4px;color:#dfe5ef;letter-spacing:0.05px;">135</div>
<div class="t" style="left:928px;top:589.80px;font-size:12.4px;color:#dfe5ef;letter-spacing:0.1px;">Simple Acknowledge</div>
<div class="t" style="left:1280px;top:589.80px;font-size:12.4px;color:#dfe5ef;letter-spacing:0.05px;">13</div>
<div class="t" style="left:928px;top:617.80px;font-size:12.4px;color:#dfe5ef;letter-spacing:0.1px;">Segment Acknowledge</div>
<div class="t" style="left:1280px;top:617.80px;font-size:12.4px;color:#dfe5ef;letter-spacing:0.05px;">2</div>
<div class="t" style="left:927.40px;top:922.64px;font-size:12px;color:#dfe5ef;transform:scaleX(1.0289);transform-origin:0 0;">Export:</div>
<div class="t" style="left:974.60px;top:922.64px;font-size:12px;color:#1ba9f5;transform:scaleX(0.9827);transform-origin:0 0;">Raw</div>
<svg style="left:1002px;top:922px" width="13" height="12" viewBox="0 0 13 12"><path d="M5 0 H7.5 V4.3 H10 L6.25 8.2 L2.5 4.3 H5 Z M0 6.8 H2.6 L6.25 10 L9.9 6.8 H12.5 V11 Q12.5 11.5 12 11.5 H0.5 Q0 11.5 0 11 Z" fill="#1ba9f5"/><circle cx="9" cy="9.6" r="0.6" fill="#1d1e24"/><circle cx="10.7" cy="9.6" r="0.6" fill="#1d1e24"/></svg>
<div class="t" style="left:1026.50px;top:922.64px;font-size:12px;color:#1ba9f5;transform:scaleX(1.0865);transform-origin:0 0;">Formatted</div>
<svg style="left:1089.7px;top:922px" width="13" height="12" viewBox="0 0 13 12"><path d="M5 0 H7.5 V4.3 H10 L6.25 8.2 L2.5 4.3 H5 Z M0 6.8 H2.6 L6.25 10 L9.9 6.8 H12.5 V11 Q12.5 11.5 12 11.5 H0.5 Q0 11.5 0 11 Z" fill="#1ba9f5"/><circle cx="9" cy="9.6" r="0.6" fill="#1d1e24"/><circle cx="10.7" cy="9.6" r="0.6" fill="#1d1e24"/></svg>
<div style="left:1409px;top:400px;width:495px;height:701px;background:#1d1e24;border:1px solid #343741;border-radius:4px;box-shadow:0 1px 1.5px rgba(0,0,0,.45),0 2px 4px rgba(0,0,0,.15)"></div>
<div class="t" style="left:1418.00px;top:407.84px;font-size:12px;color:#dfe5ef;transform:scaleX(1.0164);transform-origin:0 0;font-weight:bold;">BACnet - Service Choice</div>
<div class="t" style="left:1431px;top:448.84px;font-size:12px;color:#dfe5ef;font-weight:bold;">Service Choice</div>
<svg style="left:1519.015625px;top:449px" width="8" height="11" viewBox="0 0 8 11"><path d="M0.5 4.5 L4 0.8 L7.5 4.5 Z M0.5 6.3 L4 10 L7.5 6.3 Z" fill="#464a55"/></svg>
<div class="t" style="left:1785.6px;top:448.84px;font-size:12px;color:#dfe5ef;font-weight:bold;">Count</div>
<svg style="left:1822.25625px;top:449px" width="8" height="11" viewBox="0 0 8 11"><path d="M0.5 4.5 L4 0.8 L7.5 4.5 Z M0.5 6.3 L4 10 L7.5 6.3 Z" fill="#464a55"/></svg>
<div style="left:1426px;top:468px;width:461px;height:1px;background:#343741"></div>
<div style="left:1426px;top:496px;width:461px;height:1px;background:#343741"></div>
<div style="left:1426px;top:524px;width:461px;height:1px;background:#343741"></div>
<div style="left:1426px;top:553px;width:461px;height:1px;background:#343741"></div>
<div style="left:1426px;top:581px;width:461px;height:1px;background:#343741"></div>
<div style="left:1426px;top:609px;width:461px;height:1px;background:#343741"></div>
<div style="left:1426px;top:637px;width:461px;height:1px;background:#343741"></div>
<div style="left:1426px;top:665px;width:461px;height:1px;background:#343741"></div>
<div style="left:1426px;top:693px;width:461px;height:1px;background:#343741"></div>
<div style="left:1426px;top:722px;width:461px;height:1px;background:#343741"></div>
<div style="left:1426px;top:750px;width:461px;height:1px;background:#343741"></div>
<div style="left:1426px;top:778px;width:461px;height:1px;background:#343741"></div>
<div style="left:1426px;top:806px;width:461px;height:1px;background:#343741"></div>
<div style="left:1426px;top:834px;width:461px;height:1px;background:#343741"></div>
<div style="left:1426px;top:862px;width:461px;height:1px;background:#343741"></div>
<div class="t" style="left:1431px;top:476.80px;font-size:12.4px;color:#dfe5ef;letter-spacing:0.1px;">Read Property</div>
<div class="t" style="left:1785.6px;top:476.80px;font-size:12.4px;color:#dfe5ef;letter-spacing:0.05px;">9,026</div>
<div class="t" style="left:1431px;top:504.80px;font-size:12.4px;color:#dfe5ef;letter-spacing:0.1px;">I Am</div>
<div class="t" style="left:1785.6px;top:504.80px;font-size:12.4px;color:#dfe5ef;letter-spacing:0.05px;">222</div>
<div class="t" style="left:1431px;top:532.80px;font-size:12.4px;color:#dfe5ef;letter-spacing:0.1px;">Atomic Read File</div>
<div class="t" style="left:1785.6px;top:532.80px;font-size:12.4px;color:#dfe5ef;letter-spacing:0.05px;">128</div>
<div class="t" style="left:1431px;top:561.80px;font-size:12.4px;color:#dfe5ef;letter-spacing:0.1px;">Atomic Write File</div>
<div class="t" style="left:1785.6px;top:561.80px;font-size:12.4px;color:#dfe5ef;letter-spacing:0.05px;">126</div>
<div class="t" style="left:1431px;top:589.80px;font-size:12.4px;color:#dfe5ef;letter-spacing:0.1px;">Write Property</div>
<div class="t" style="left:1785.6px;top:589.80px;font-size:12.4px;color:#dfe5ef;letter-spacing:0.05px;">18</div>
<div class="t" style="left:1431px;top:617.80px;font-size:12.4px;color:#dfe5ef;letter-spacing:0.1px;">Who Is</div>
<div class="t" style="left:1785.6px;top:617.80px;font-size:12.4px;color:#dfe5ef;letter-spacing:0.05px;">12</div>
<div class="t" style="left:1431px;top:645.80px;font-size:12.4px;color:#dfe5ef;letter-spacing:0.1px;">Device Communication Control</div>
<div class="t" style="left:1785.6px;top:645.80px;font-size:12.4px;color:#dfe5ef;letter-spacing:0.05px;">8</div>
<div class="t" style="left:1431px;top:673.80px;font-size:12.4px;color:#dfe5ef;letter-spacing:0.1px;">Reinitialize Device</div>
<div class="t" style="left:1785.6px;top:673.80px;font-size:12.4px;color:#dfe5ef;letter-spacing:0.05px;">8</div>
<div class="t" style="left:1431px;top:701.80px;font-size:12.4px;color:#dfe5ef;letter-spacing:0.1px;">Who Has</div>
<div class="t" style="left:1785.6px;top:701.80px;font-size:12.4px;color:#dfe5ef;letter-spacing:0.05px;">4</div>
<div class="t" style="left:1431px;top:730.80px;font-size:12.4px;color:#dfe5ef;letter-spacing:0.1px;">I Have</div>
<div class="t" style="left:1785.6px;top:730.80px;font-size:12.4px;color:#dfe5ef;letter-spacing:0.05px;">3</div>
<div class="t" style="left:1431px;top:758.80px;font-size:12.4px;color:#dfe5ef;letter-spacing:0.1px;">Read Property Multiple</div>
<div class="t" style="left:1785.6px;top:758.80px;font-size:12.4px;color:#dfe5ef;letter-spacing:0.05px;">3</div>
<div class="t" style="left:1431px;top:786.80px;font-size:12.4px;color:#dfe5ef;letter-spacing:0.1px;">Time Synchronization</div>
<div class="t" style="left:1785.6px;top:786.80px;font-size:12.4px;color:#dfe5ef;letter-spacing:0.05px;">1</div>
<div class="t" style="left:1430.40px;top:922.64px;font-size:12px;color:#dfe5ef;transform:scaleX(1.0289);transform-origin:0 0;">Export:</div>
<div class="t" style="left:1477.60px;top:922.64px;font-size:12px;color:#1ba9f5;transform:scaleX(0.9827);transform-origin:0 0;">Raw</div>
<svg style="left:1505px;top:922px" width="13" height="12" viewBox="0 0 13 12"><path d="M5 0 H7.5 V4.3 H10 L6.25 8.2 L2.5 4.3 H5 Z M0 6.8 H2.6 L6.25 10 L9.9 6.8 H12.5 V11 Q12.5 11.5 12 11.5 H0.5 Q0 11.5 0 11 Z" fill="#1ba9f5"/><circle cx="9" cy="9.6" r="0.6" fill="#1d1e24"/><circle cx="10.7" cy="9.6" r="0.6" fill="#1d1e24"/></svg>
<div class="t" style="left:1529.50px;top:922.64px;font-size:12px;color:#1ba9f5;transform:scaleX(1.0865);transform-origin:0 0;">Formatted</div>
<svg style="left:1592.7px;top:922px" width="13" height="12" viewBox="0 0 13 12"><path d="M5 0 H7.5 V4.3 H10 L6.25 8.2 L2.5 4.3 H5 Z M0 6.8 H2.6 L6.25 10 L9.9 6.8 H12.5 V11 Q12.5 11.5 12 11.5 H0.5 Q0 11.5 0 11 Z" fill="#1ba9f5"/><circle cx="9" cy="9.6" r="0.6" fill="#1d1e24"/><circle cx="10.7" cy="9.6" r="0.6" fill="#1d1e24"/></svg>
</body></html>
